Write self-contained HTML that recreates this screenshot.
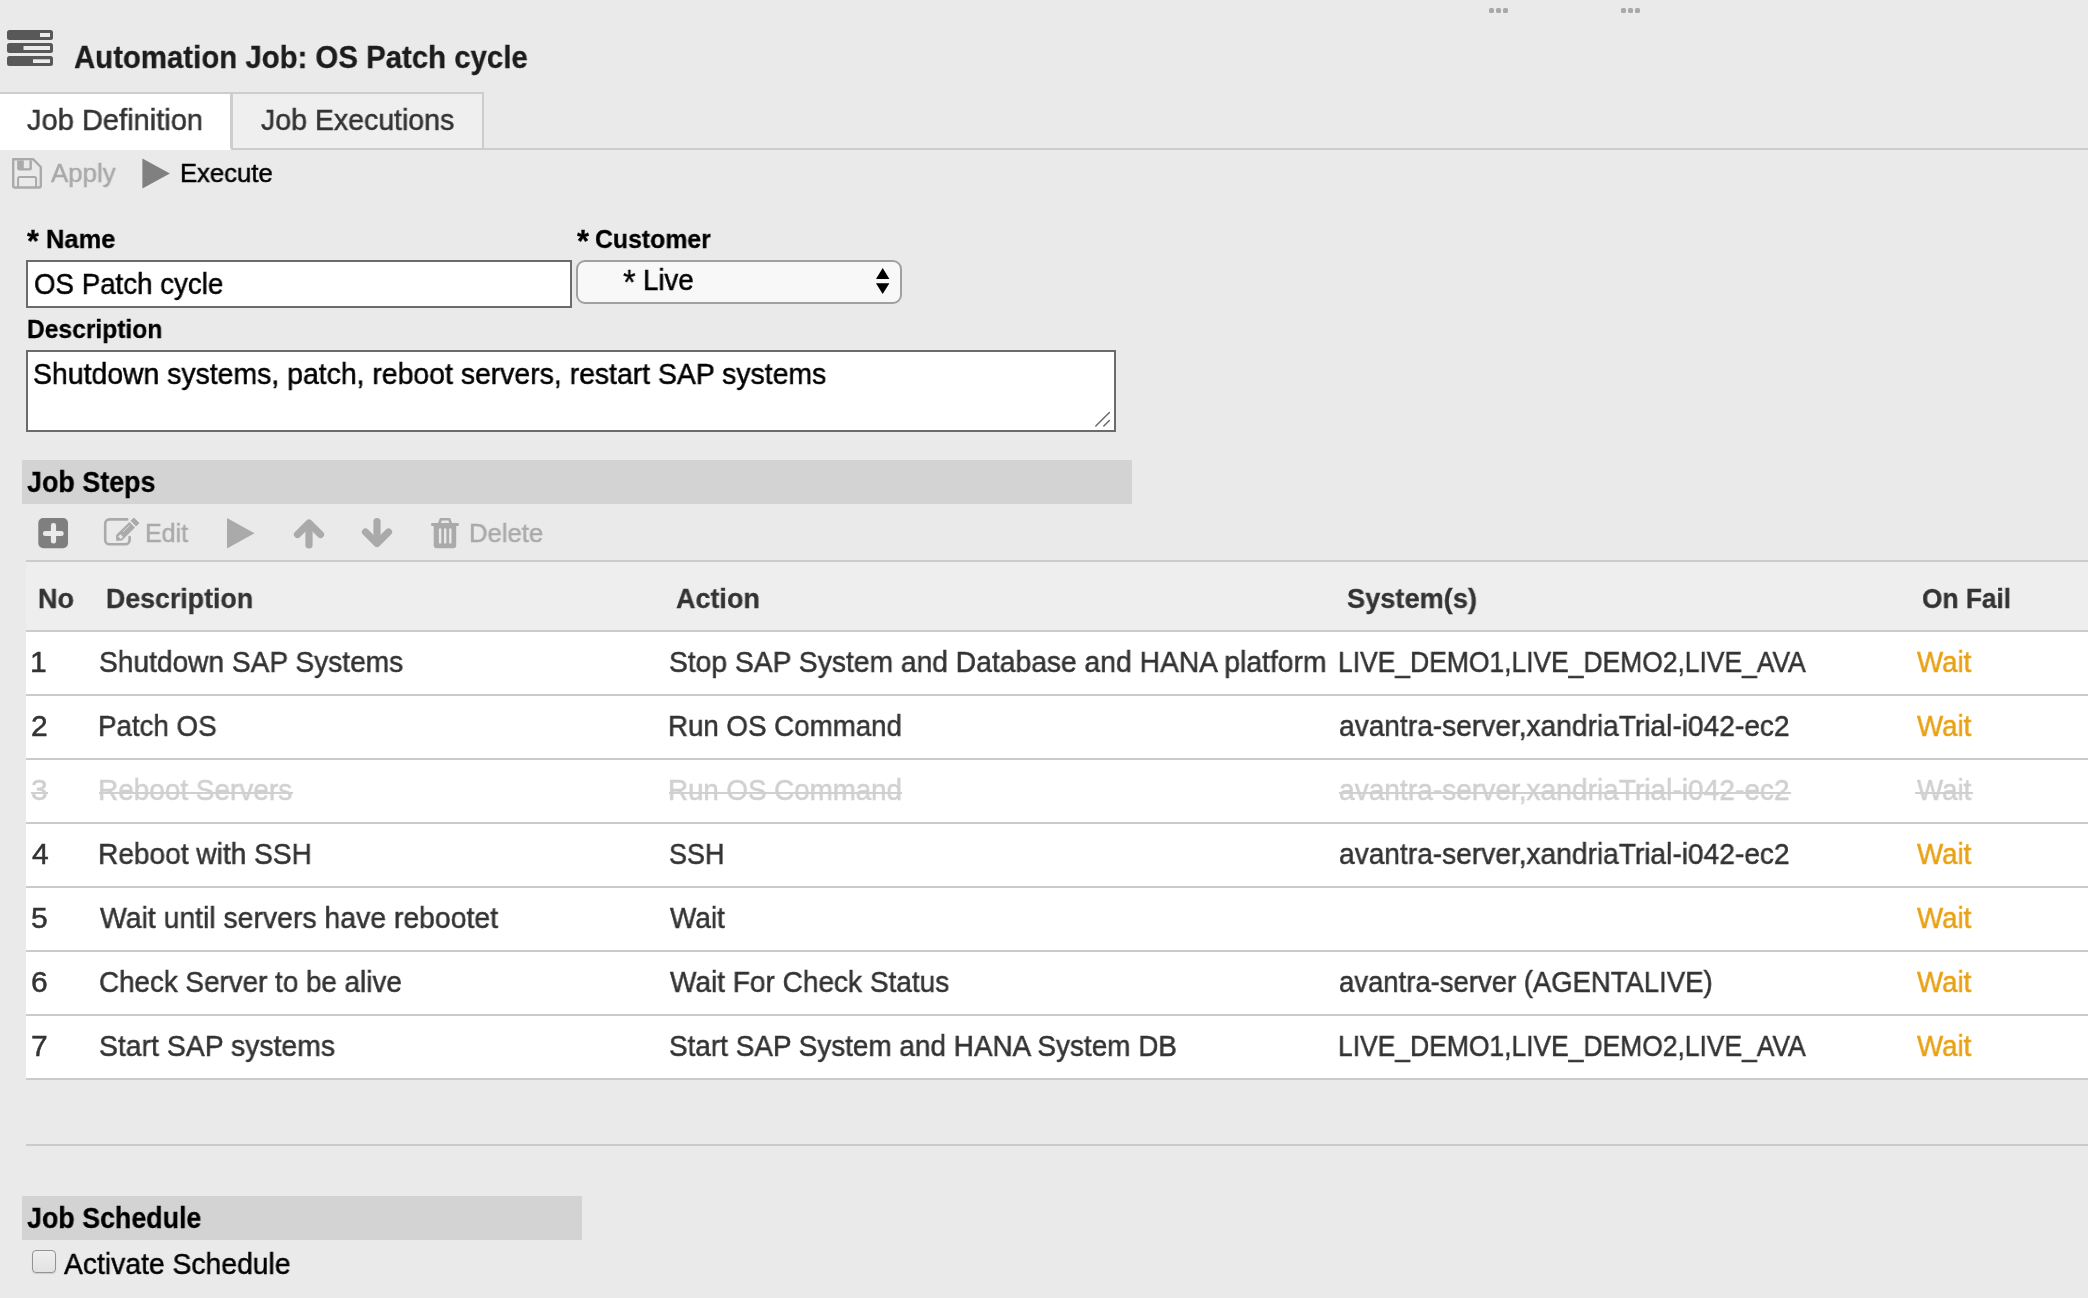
<!DOCTYPE html>
<html><head><meta charset="utf-8"><title>Automation Job</title>
<style>
html,body{margin:0;padding:0;width:2088px;height:1298px;overflow:hidden;background:#eaeaea;}
body{position:relative;font-family:"Liberation Sans",sans-serif;}
.t{position:absolute;white-space:pre;line-height:1;will-change:transform;transform-origin:0 0;font-family:"Liberation Sans",sans-serif;}
.b{position:absolute;box-sizing:border-box;}
</style></head><body>
<!-- top dots -->
<div class="b" style="left:1489px;top:8px;width:5px;height:5px;background:#a9a9a9;border-radius:1.5px"></div>
<div class="b" style="left:1496px;top:8px;width:5px;height:5px;background:#a9a9a9;border-radius:1.5px"></div>
<div class="b" style="left:1503px;top:8px;width:5px;height:5px;background:#a9a9a9;border-radius:1.5px"></div>
<div class="b" style="left:1621px;top:8px;width:5px;height:5px;background:#a9a9a9;border-radius:1.5px"></div>
<div class="b" style="left:1628px;top:8px;width:5px;height:5px;background:#a9a9a9;border-radius:1.5px"></div>
<div class="b" style="left:1635px;top:8px;width:5px;height:5px;background:#a9a9a9;border-radius:1.5px"></div>
<!-- server icon -->
<svg class="b" style="left:0;top:0" width="70" height="80" viewBox="0 0 70 80">
 <rect x="7" y="30" width="46" height="10" rx="2.5" fill="#585858"/>
 <rect x="7" y="43" width="46" height="10" rx="2.5" fill="#585858"/>
 <rect x="7" y="56" width="46" height="10" rx="2.5" fill="#585858"/>
 <rect x="40" y="33" width="10" height="4" fill="#ececec"/>
 <rect x="23.5" y="46" width="26.5" height="4" fill="#ececec"/>
 <rect x="33" y="59.3" width="17" height="3.7" fill="#ececec"/>
</svg>
<!-- tabs -->
<div class="b" style="left:0;top:92px;width:231px;height:58px;background:#fff;border-top:2px solid #cdcdcd"></div>
<div class="b" style="left:230px;top:92px;width:254px;height:58px;background:#efefef;border:2px solid #cdcdcd;border-left-width:3px;border-bottom-left-radius:3px"></div>
<div class="b" style="left:231px;top:148px;width:1857px;height:2px;background:#cdcdcd"></div>
<!-- floppy (apply) -->
<svg class="b" style="left:0;top:150px" width="60" height="50" viewBox="0 150 60 50">
 <path d="M13.2 159.2 H33 L40.8 167 V186 a1.5 1.5 0 0 1 -1.5 1.5 H14.7 a1.5 1.5 0 0 1 -1.5 -1.5 Z" fill="none" stroke="#aaaaaa" stroke-width="2.4" stroke-linejoin="round"/>
 <path d="M17.1 160.4 H31.9 V168.6 a2 2 0 0 1 -2 2 H19.1 a2 2 0 0 1 -2 -2 Z" fill="#aaaaaa"/>
 <rect x="23.8" y="160.4" width="5.6" height="7.8" fill="#e9e9e9"/>
 <path d="M18.1 187.5 V178.6 a1.5 1.5 0 0 1 1.5 -1.5 H34.6 a1.5 1.5 0 0 1 1.5 1.5 V187.5" fill="none" stroke="#aaaaaa" stroke-width="2"/>
</svg>
<!-- execute play -->
<svg class="b" style="left:130px;top:150px" width="50" height="50" viewBox="130 150 50 50">
 <polygon points="142.4,158.4 142.4,188.6 169.9,173.5" fill="#808080"/>
</svg>
<!-- name input -->
<div class="b" style="left:26px;top:260px;width:546px;height:48px;background:#fff;border:2px solid #6b6b6b"></div>
<!-- select -->
<div class="b" style="left:576px;top:260px;width:326px;height:44px;background:#f8f8f8;border:2px solid #a0a0a0;border-radius:9px"></div>
<svg class="b" style="left:860px;top:260px" width="40" height="44" viewBox="860 260 40 44">
 <polygon points="876,279 889.4,279 882.7,268" fill="#000"/>
 <polygon points="876,283.2 889.4,283.2 882.7,294" fill="#000"/>
</svg>
<!-- textarea -->
<div class="b" style="left:26px;top:350px;width:1090px;height:82px;background:#fff;border:2px solid #6b6b6b"></div>
<svg class="b" style="left:1090px;top:405px" width="25" height="25" viewBox="1090 405 25 25">
 <line x1="1095.8" y1="426" x2="1109.4" y2="412.4" stroke="#666" stroke-width="1.4" stroke-linecap="round"/>
 <line x1="1103.8" y1="426" x2="1109.4" y2="420.4" stroke="#666" stroke-width="1.4" stroke-linecap="round"/>
</svg>
<!-- job steps bar -->
<div class="b" style="left:22px;top:460px;width:1110px;height:44px;background:#d3d3d3"></div>
<!-- steps toolbar icons -->
<svg class="b" style="left:0;top:505px" width="600" height="50" viewBox="0 505 600 50">
 <rect x="38.3" y="518" width="29.7" height="30.2" rx="5" fill="#7f7f7f"/>
 <rect x="42.9" y="530.9" width="20.8" height="5.2" rx="2.4" fill="#eaeaea"/>
 <rect x="50.9" y="523" width="5.2" height="20.6" rx="2.4" fill="#eaeaea"/>
 <path d="M127.2 519.4 H109.5 a4.3 4.3 0 0 0 -4.3 4.3 V540 a4.3 4.3 0 0 0 4.3 4.3 H125.3 a4.3 4.3 0 0 0 4.3 -4.3 V537" fill="none" stroke="#aaaaaa" stroke-width="2.6" stroke-linecap="round"/>
 <polygon points="129.4,522 135,527.6 121.9,540.6 116.1,540.8 116.1,535.1" fill="#aaaaaa"/>
 <polygon points="131.1,520.7 133.9,518.1 138.9,523 136.2,526" fill="#aaaaaa" stroke="#aaaaaa" stroke-width="1" stroke-linejoin="round"/>
 <line x1="122.9" y1="532" x2="129.6" y2="525.3" stroke="#dedede" stroke-width="0.9"/>
 <polygon points="118.2,536.5 120.4,534.3 123,536.9 120.8,539.1" fill="#e9e9e9"/>
 <polygon points="227,518 227,548.6 254.5,533.3" fill="#aaaaaa"/>
 <polyline points="297.5,534.5 309,523 320.5,534.5" fill="none" stroke="#aaaaaa" stroke-width="7.2" stroke-linecap="round" stroke-linejoin="round"/>
 <line x1="309" y1="524" x2="309" y2="545" stroke="#aaaaaa" stroke-width="7.2" stroke-linecap="round"/>
 <polyline points="365.5,532 377,543.5 388.5,532" fill="none" stroke="#aaaaaa" stroke-width="7.2" stroke-linecap="round" stroke-linejoin="round"/>
 <line x1="377" y1="521.5" x2="377" y2="542.5" stroke="#aaaaaa" stroke-width="7.2" stroke-linecap="round"/>
 <rect x="431" y="522.9" width="28" height="3.2" rx="1.4" fill="#aaaaaa"/>
 <path d="M439.3 523.5 L440.8 519.3 H449.3 L450.8 523.5" fill="none" stroke="#aaaaaa" stroke-width="2.6" stroke-linejoin="round"/>
 <path d="M433.7 525 H456.2 V545.3 a3 3 0 0 1 -3 3 H436.7 a3 3 0 0 1 -3 -3 Z" fill="#aaaaaa"/>
 <rect x="438.9" y="528.2" width="2.4" height="15.4" rx="1.2" fill="#e9e9e9"/>
 <rect x="444" y="528.2" width="2.4" height="15.4" rx="1.2" fill="#e9e9e9"/>
 <rect x="449.1" y="528.2" width="2.4" height="15.4" rx="1.2" fill="#e9e9e9"/>
</svg>
<!-- table -->
<div class="b" style="left:26px;top:560px;width:2062px;height:2px;background:#cbcbcb"></div>
<div class="b" style="left:26px;top:562px;width:2062px;height:68px;background:#eeeeee"></div>
<div class="b" style="left:26px;top:630px;width:2062px;height:450px;background:#fff"></div>
<div class="b" style="left:26px;top:630px;width:2062px;height:2px;background:#cbcbcb"></div>
<div class="b" style="left:26px;top:694px;width:2062px;height:2px;background:#cbcbcb"></div>
<div class="b" style="left:26px;top:758px;width:2062px;height:2px;background:#cbcbcb"></div>
<div class="b" style="left:26px;top:822px;width:2062px;height:2px;background:#cbcbcb"></div>
<div class="b" style="left:26px;top:886px;width:2062px;height:2px;background:#cbcbcb"></div>
<div class="b" style="left:26px;top:950px;width:2062px;height:2px;background:#cbcbcb"></div>
<div class="b" style="left:26px;top:1014px;width:2062px;height:2px;background:#cbcbcb"></div>
<div class="b" style="left:26px;top:1078px;width:2062px;height:2px;background:#cbcbcb"></div>
<div class="b" style="left:26px;top:1144px;width:2062px;height:2px;background:#cbcbcb"></div>
<!-- job schedule -->
<div class="b" style="left:22px;top:1196px;width:560px;height:44px;background:#d3d3d3"></div>
<div class="b" style="left:32px;top:1250px;width:24px;height:23px;border:1.6px solid #939393;border-radius:4px;background:linear-gradient(#efefef,#e2e2e2);box-shadow:0 1px 1px rgba(0,0,0,0.12)"></div>

<span class="t" style="left:74.00px;top:41px;font-size:32px;font-weight:700;color:#1c1c1c;transform:scaleX(0.9179);-webkit-text-stroke:0.3px #1c1c1c;">Automation Job: OS Patch cycle</span><span class="t" style="left:27.40px;top:105px;font-size:30px;font-weight:400;color:#333333;transform:scaleX(0.9684);-webkit-text-stroke:0.5px #333333;">Job Definition</span><span class="t" style="left:261.10px;top:105px;font-size:30px;font-weight:400;color:#333333;transform:scaleX(0.9499);-webkit-text-stroke:0.5px #333333;">Job Executions</span><span class="t" style="left:51.40px;top:160px;font-size:26px;font-weight:400;color:#a9a9a9;transform:scaleX(0.9933);-webkit-text-stroke:0.5px #a9a9a9;">Apply</span><span class="t" style="left:180.03px;top:160px;font-size:26px;font-weight:400;color:#000000;transform:scaleX(0.9870);-webkit-text-stroke:0.5px #000000;">Execute</span><span class="t" style="left:45.82px;top:226px;font-size:26px;font-weight:700;color:#000000;transform:scaleX(0.9805);-webkit-text-stroke:0.3px #000000;">Name</span><span class="t" style="left:595.05px;top:226px;font-size:26px;font-weight:700;color:#000000;transform:scaleX(0.9540);-webkit-text-stroke:0.3px #000000;">Customer</span><span class="t" style="left:33.68px;top:269px;font-size:30px;font-weight:400;color:#000000;transform:scaleX(0.9228);-webkit-text-stroke:0.5px #000000;">OS Patch cycle</span><span class="t" style="left:642.85px;top:265px;font-size:30px;font-weight:400;color:#000000;transform:scaleX(0.9226);-webkit-text-stroke:0.5px #000000;">Live</span><span class="t" style="left:27.05px;top:316px;font-size:26px;font-weight:700;color:#000000;transform:scaleX(0.9458);-webkit-text-stroke:0.3px #000000;">Description</span><span class="t" style="left:33.05px;top:359px;font-size:30px;font-weight:400;color:#000000;transform:scaleX(0.9466);-webkit-text-stroke:0.5px #000000;">Shutdown systems, patch, reboot servers, restart SAP systems</span><span class="t" style="left:27.20px;top:467px;font-size:30px;font-weight:700;color:#000000;transform:scaleX(0.8957);-webkit-text-stroke:0.3px #000000;">Job Steps</span><span class="t" style="left:145.07px;top:520px;font-size:26px;font-weight:400;color:#aaaaaa;transform:scaleX(0.9638);-webkit-text-stroke:0.5px #aaaaaa;">Edit</span><span class="t" style="left:469.03px;top:520px;font-size:26px;font-weight:400;color:#aaaaaa;transform:scaleX(0.9863);-webkit-text-stroke:0.5px #aaaaaa;">Delete</span><span class="t" style="left:38.34px;top:585px;font-size:28px;font-weight:700;color:#333333;transform:scaleX(0.9635);-webkit-text-stroke:0.3px #333333;">No</span><span class="t" style="left:106.24px;top:585px;font-size:28px;font-weight:700;color:#333333;transform:scaleX(0.9551);-webkit-text-stroke:0.3px #333333;">Description</span><span class="t" style="left:676.20px;top:585px;font-size:28px;font-weight:700;color:#333333;transform:scaleX(0.9628);-webkit-text-stroke:0.3px #333333;">Action</span><span class="t" style="left:1346.90px;top:585px;font-size:28px;font-weight:700;color:#333333;transform:scaleX(0.9712);-webkit-text-stroke:0.3px #333333;">System(s)</span><span class="t" style="left:1922.06px;top:585px;font-size:28px;font-weight:700;color:#333333;transform:scaleX(0.9390);-webkit-text-stroke:0.3px #333333;">On Fail</span><span class="t" style="left:30.00px;top:647px;font-size:30px;font-weight:400;color:#333333;transform:scaleX(1.0000);-webkit-text-stroke:0.5px #333333;">1</span><span class="t" style="left:99.16px;top:647px;font-size:30px;font-weight:400;color:#333333;transform:scaleX(0.9373);-webkit-text-stroke:0.5px #333333;">Shutdown SAP Systems</span><span class="t" style="left:668.86px;top:647px;font-size:30px;font-weight:400;color:#333333;transform:scaleX(0.9416);-webkit-text-stroke:0.5px #333333;">Stop SAP System and Database and HANA platform</span><span class="t" style="left:1338.34px;top:647px;font-size:30px;font-weight:400;color:#333333;transform:scaleX(0.8813);-webkit-text-stroke:0.5px #333333;">LIVE_DEMO1,LIVE_DEMO2,LIVE_AVA</span><span class="t" style="left:1916.50px;top:647px;font-size:30px;font-weight:400;color:#e9a013;transform:scaleX(0.9219);-webkit-text-stroke:0.5px #e9a013;">Wait</span><span class="t" style="left:31.00px;top:711px;font-size:30px;font-weight:400;color:#333333;transform:scaleX(1.0000);-webkit-text-stroke:0.5px #333333;">2</span><span class="t" style="left:98.25px;top:711px;font-size:30px;font-weight:400;color:#333333;transform:scaleX(0.9236);-webkit-text-stroke:0.5px #333333;">Patch OS</span><span class="t" style="left:667.95px;top:711px;font-size:30px;font-weight:400;color:#333333;transform:scaleX(0.9229);-webkit-text-stroke:0.5px #333333;">Run OS Command</span><span class="t" style="left:1339.16px;top:711px;font-size:30px;font-weight:400;color:#333333;transform:scaleX(0.9372);-webkit-text-stroke:0.5px #333333;">avantra-server,xandriaTrial-i042-ec2</span><span class="t" style="left:1916.50px;top:711px;font-size:30px;font-weight:400;color:#e9a013;transform:scaleX(0.9219);-webkit-text-stroke:0.5px #e9a013;">Wait</span><span class="t" style="left:31.00px;top:775px;font-size:30px;font-weight:400;color:#d0d0d0;transform:scaleX(1.0000);-webkit-text-stroke:0.5px #d0d0d0;">3</span><span class="t" style="left:98.24px;top:775px;font-size:30px;font-weight:400;color:#d0d0d0;transform:scaleX(0.9312);-webkit-text-stroke:0.5px #d0d0d0;">Reboot Servers</span><span class="t" style="left:667.95px;top:775px;font-size:30px;font-weight:400;color:#d0d0d0;transform:scaleX(0.9229);-webkit-text-stroke:0.5px #d0d0d0;">Run OS Command</span><span class="t" style="left:1339.16px;top:775px;font-size:30px;font-weight:400;color:#d0d0d0;transform:scaleX(0.9372);-webkit-text-stroke:0.5px #d0d0d0;">avantra-server,xandriaTrial-i042-ec2</span><span class="t" style="left:1916.50px;top:775px;font-size:30px;font-weight:400;color:#d0d0d0;transform:scaleX(0.9219);-webkit-text-stroke:0.5px #d0d0d0;">Wait</span><span class="t" style="left:32.00px;top:839px;font-size:30px;font-weight:400;color:#333333;transform:scaleX(1.0000);-webkit-text-stroke:0.5px #333333;">4</span><span class="t" style="left:98.23px;top:839px;font-size:30px;font-weight:400;color:#333333;transform:scaleX(0.9360);-webkit-text-stroke:0.5px #333333;">Reboot with SSH</span><span class="t" style="left:668.90px;top:839px;font-size:30px;font-weight:400;color:#333333;transform:scaleX(0.8980);-webkit-text-stroke:0.5px #333333;">SSH</span><span class="t" style="left:1339.16px;top:839px;font-size:30px;font-weight:400;color:#333333;transform:scaleX(0.9372);-webkit-text-stroke:0.5px #333333;">avantra-server,xandriaTrial-i042-ec2</span><span class="t" style="left:1916.50px;top:839px;font-size:30px;font-weight:400;color:#e9a013;transform:scaleX(0.9219);-webkit-text-stroke:0.5px #e9a013;">Wait</span><span class="t" style="left:31.00px;top:903px;font-size:30px;font-weight:400;color:#333333;transform:scaleX(1.0000);-webkit-text-stroke:0.5px #333333;">5</span><span class="t" style="left:100.10px;top:903px;font-size:30px;font-weight:400;color:#333333;transform:scaleX(0.9459);-webkit-text-stroke:0.5px #333333;">Wait until servers have rebootet</span><span class="t" style="left:669.80px;top:903px;font-size:30px;font-weight:400;color:#333333;transform:scaleX(0.9303);-webkit-text-stroke:0.5px #333333;">Wait</span><span class="t" style="left:1916.50px;top:903px;font-size:30px;font-weight:400;color:#e9a013;transform:scaleX(0.9219);-webkit-text-stroke:0.5px #e9a013;">Wait</span><span class="t" style="left:31.00px;top:967px;font-size:30px;font-weight:400;color:#333333;transform:scaleX(1.0000);-webkit-text-stroke:0.5px #333333;">6</span><span class="t" style="left:99.17px;top:967px;font-size:30px;font-weight:400;color:#333333;transform:scaleX(0.9264);-webkit-text-stroke:0.5px #333333;">Check Server to be alive</span><span class="t" style="left:669.80px;top:967px;font-size:30px;font-weight:400;color:#333333;transform:scaleX(0.9340);-webkit-text-stroke:0.5px #333333;">Wait For Check Status</span><span class="t" style="left:1339.18px;top:967px;font-size:30px;font-weight:400;color:#333333;transform:scaleX(0.9158);-webkit-text-stroke:0.5px #333333;">avantra-server (AGENTALIVE)</span><span class="t" style="left:1916.50px;top:967px;font-size:30px;font-weight:400;color:#e9a013;transform:scaleX(0.9219);-webkit-text-stroke:0.5px #e9a013;">Wait</span><span class="t" style="left:31.00px;top:1031px;font-size:30px;font-weight:400;color:#333333;transform:scaleX(1.0000);-webkit-text-stroke:0.5px #333333;">7</span><span class="t" style="left:99.15px;top:1031px;font-size:30px;font-weight:400;color:#333333;transform:scaleX(0.9461);-webkit-text-stroke:0.5px #333333;">Start SAP systems</span><span class="t" style="left:668.87px;top:1031px;font-size:30px;font-weight:400;color:#333333;transform:scaleX(0.9297);-webkit-text-stroke:0.5px #333333;">Start SAP System and HANA System DB</span><span class="t" style="left:1338.34px;top:1031px;font-size:30px;font-weight:400;color:#333333;transform:scaleX(0.8813);-webkit-text-stroke:0.5px #333333;">LIVE_DEMO1,LIVE_DEMO2,LIVE_AVA</span><span class="t" style="left:1916.50px;top:1031px;font-size:30px;font-weight:400;color:#e9a013;transform:scaleX(0.9219);-webkit-text-stroke:0.5px #e9a013;">Wait</span><span class="t" style="left:27.20px;top:1203px;font-size:30px;font-weight:700;color:#000000;transform:scaleX(0.8942);-webkit-text-stroke:0.3px #000000;">Job Schedule</span><span class="t" style="left:64.30px;top:1249px;font-size:30px;font-weight:400;color:#000000;transform:scaleX(0.9434);-webkit-text-stroke:0.5px #000000;">Activate Schedule</span><span class="t" style="left:27.00px;top:226.13px;font-size:31.1px;font-weight:700;color:#000;transform:scaleX(0.9811);-webkit-text-stroke:0.3px #000">*</span><span class="t" style="left:577.10px;top:226.78px;font-size:30.8px;font-weight:700;color:#000;transform:scaleX(0.9990);-webkit-text-stroke:0.3px #000">*</span><span class="t" style="left:623.27px;top:263.52px;font-size:35.0px;font-weight:400;color:#000;transform:scaleX(0.9344);-webkit-text-stroke:0.3px #000">*</span><div class="b" style="left:30.8px;top:792px;width:17.2px;height:2px;background:#d0d0d0"></div><div class="b" style="left:98.9px;top:792px;width:194.0px;height:2px;background:#d0d0d0"></div><div class="b" style="left:668.6px;top:792px;width:233.2px;height:2px;background:#d0d0d0"></div><div class="b" style="left:1338.9px;top:792px;width:451.7px;height:2px;background:#d0d0d0"></div><div class="b" style="left:1915.3px;top:792px;width:57.6px;height:2px;background:#d0d0d0"></div>
</body></html>
